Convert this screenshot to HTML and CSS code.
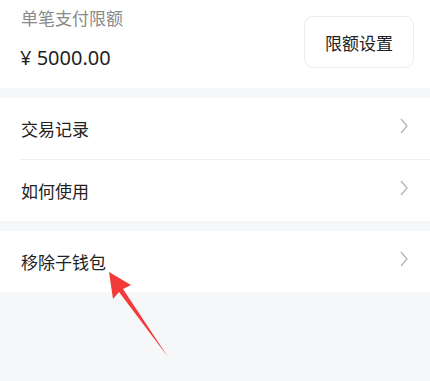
FILE: index.html
```html
<!DOCTYPE html>
<html lang="zh-CN">
<head>
<meta charset="utf-8">
<link rel="stylesheet" href="styles.css">
</head>
<body>
<div class="page">
  <section class="limit card">
    <div class="limit-info">
      <div class="limit-label">单笔支付限额</div>
      <div class="limit-value">¥ 5000.00</div>
    </div>
    <button class="limit-btn">限额设置</button>
  </section>
  <section class="card list">
    <div class="row"><span>交易记录</span><svg class="chev" viewBox="0 0 8 16"><path d="M1 1 L7 8 L1 15" /></svg></div>
    <div class="divider"></div>
    <div class="row"><span>如何使用</span><svg class="chev" viewBox="0 0 8 16"><path d="M1 1 L7 8 L1 15" /></svg></div>
  </section>
  <section class="card list">
    <div class="row"><span>移除子钱包</span><svg class="chev" viewBox="0 0 8 16"><path d="M1 1 L7 8 L1 15" /></svg></div>
  </section>
</div>
<svg class="arrow" width="430" height="381" viewBox="0 0 430 381"><polygon points="109,272 131,285 123,289 168,357 119,292 113,299" /></svg>
</body>
</html>
```
FILE: styles.css
```css
html, body {
  margin: 0;
  padding: 0;
}
body {
  width: 430px;
  height: 381px;
  overflow: hidden;
  background: #f6f7f9;
  font-family: "Noto Sans CJK SC", "Noto Sans", sans-serif;
  position: relative;
}
.page {
  display: flex;
  flex-direction: column;
  gap: 10px;
}
.card {
  background: #fff;
}
.limit {
  height: 88px;
  display: flex;
  justify-content: space-between;
  align-items: flex-start;
  padding: 0 16px 0 21px;
  box-sizing: border-box;
}
.limit-info {
  display: flex;
  flex-direction: column;
}
.limit-label {
  margin-top: 4px;
  font-size: 17px;
  line-height: 28px;
  color: #8a8a8a;
}
.limit-value {
  margin-top: 12px;
  font-family: "Noto Sans", sans-serif;
  font-size: 20px;
  line-height: 28px;
  color: #1f1f1f;
  margin-left: -1px;
}
.limit-btn {
  margin-top: 16px;
  width: 110px;
  height: 52px;
  border: 1px solid #ececec;
  border-radius: 9px;
  background: #fff;
  font-family: "Noto Sans CJK SC", sans-serif;
  font-size: 17px;
  color: #222;
  padding: 0;
}
.list {
  display: flex;
  flex-direction: column;
}
.row {
  height: 61px;
  display: flex;
  align-items: center;
  justify-content: space-between;
  padding: 0 22px 0 21px;
  font-size: 17px;
  color: #222;
}
.divider {
  height: 1px;
  background: #f0f0f0;
  margin-left: 20px;
}
.chev {
  width: 8px;
  height: 16px;
  fill: none;
  stroke: #b3b3b3;
  stroke-width: 1.3;
  margin-top: -5px;
}
.arrow {
  position: absolute;
  left: 0;
  top: 0;
}
.arrow polygon {
  fill: #f23a3a;
}
```
